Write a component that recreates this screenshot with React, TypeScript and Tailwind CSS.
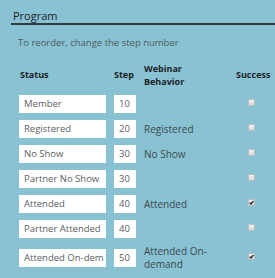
type Row = {
  status: string;
  step: string;
  webinar?: string;
  success: boolean;
};

const rows: Row[] = [
  { status: 'Member', step: '10', success: false },
  { status: 'Registered', step: '20', webinar: 'Registered', success: false },
  { status: 'No Show', step: '30', webinar: 'No Show', success: false },
  { status: 'Partner No Show', step: '30', success: false },
  { status: 'Attended', step: '40', webinar: 'Attended', success: true },
  { status: 'Partner Attended', step: '40', success: false },
  { status: 'Attended On-demand', step: '50', webinar: 'Attended On-demand', success: true },
];

function Checkbox({ checked }: { checked: boolean }) {
  return (
    <div className="mb-[4px] ml-[12px] flex h-[7px] w-[7px] items-center justify-center border border-[#b9bec0] bg-gradient-to-b from-[#f4f4f4] to-[#d8d8d8]">
      {checked && (
        <svg width="5" height="5" viewBox="0 0 5 5">
          <path d="M0.6 2.6 L2 4 L4.5 0.8" stroke="#222" strokeWidth="1.3" fill="none" />
        </svg>
      )}
    </div>
  );
}

export default function App() {
  return (
    <div className="h-[278px] w-[275px] overflow-hidden bg-[#89c2d3] font-['Open_Sans',sans-serif]">
      <div className="pl-[11px] pt-[9px]">
        <div className="pl-[2px] text-[11px] leading-[14px] text-[#1c2326]">Program</div>
        <div className="h-[2px] bg-[#2f3d42]" />
      </div>

      <p className="mt-[11px] pl-[18px] text-[9.5px] leading-[14px] text-[#4f5b60]">
        To reorder, change the step number
      </p>

      <div className="mt-[12px] grid grid-cols-[87px_22px_84px_1fr] items-center gap-x-[8px] gap-y-[7px] pl-[19px] text-[10px] text-[#3e4a4f]">
        <div className="pl-[1px] text-[9px] font-bold text-[#1c2326]">Status</div>
        <div className="text-[9px] font-bold text-[#1c2326]">Step</div>
        <div className="text-[9px] font-bold leading-[13px] text-[#1c2326]">
          Webinar
          <br />
          Behavior
        </div>
        <div className="text-[9px] font-bold text-[#1c2326]">Success</div>

        {rows.map((r, i) => (
          <div key={i} className="contents">
            <div className="h-[18px] bg-white pl-[5px] pr-[2px] text-[9.5px] leading-[18px] text-[#5a5f62]">
              <span className="block overflow-hidden whitespace-nowrap">{r.status}</span>
            </div>
            <div className="h-[18px] bg-white pl-[5px] text-[9.5px] leading-[18px] text-[#5a5f62]">{r.step}</div>
            <div className="leading-[13px]">{r.webinar}</div>
            <Checkbox checked={r.success} />
          </div>
        ))}
      </div>
    </div>
  );
}
